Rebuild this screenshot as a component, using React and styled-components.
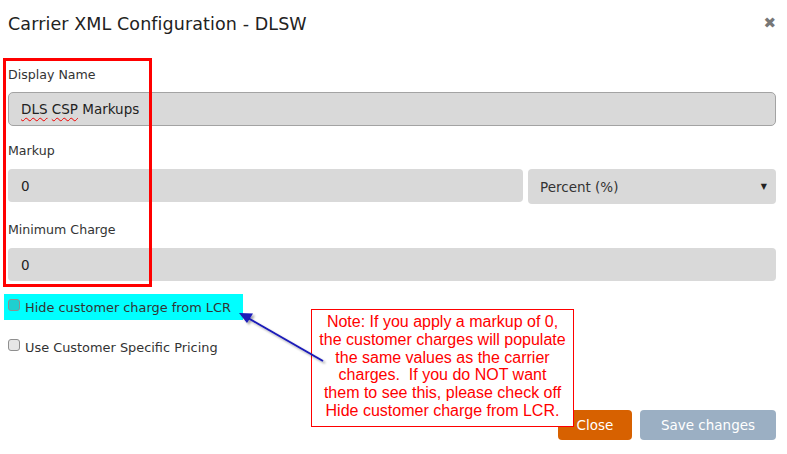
import React from "react";
import styled, { createGlobalStyle } from "styled-components";

const Global = createGlobalStyle`
  html, body { margin: 0; padding: 0; background: #fff; }
  body { font-family: "DejaVu Sans", "Noto Sans", sans-serif; color: #333; }
  * { box-sizing: border-box; }
`;

const Page = styled.div`
  position: relative;
  width: 787px;
  height: 454px;
  overflow: hidden;
  background: #fff;
`;

const Dialog = styled.div`
  display: flex;
  flex-direction: column;
  padding: 0 11px 0 8px;
`;

const Header = styled.div`
  display: flex;
  align-items: center;
  justify-content: space-between;
  height: 44px;
  padding-top: 3px;
`;

const Title = styled.h4`
  margin: 0;
  font-size: 17.5px;
  font-weight: 400;
  color: #222;
  line-height: 24px;
  letter-spacing: 0.1px;
`;

const CloseX = styled.span`
  font-size: 15px;
  color: #777;
  font-weight: bold;
  margin-right: 0px;
  line-height: 1;
`;

const Body = styled.div`
  display: flex;
  flex-direction: column;
  padding-top: 22px;
`;

const Group = styled.div`
  display: flex;
  flex-direction: column;
  margin-bottom: ${(p) => p.$mb || 0}px;
`;

const Label = styled.label`
  font-size: 12.6px;
  line-height: 18px;
  color: #333;
  margin-bottom: ${(p) => p.$mb || 8}px;
`;

const Input = styled.div`
  display: flex;
  align-items: center;
  height: ${(p) => p.$h || 33}px;
  background: #d9d9d9;
  border: ${(p) => (p.$bordered ? "1px solid #a3a3a3" : "none")};
  border-radius: ${(p) => (p.$bordered ? 5 : 4)}px;
  padding-left: ${(p) => (p.$bordered ? 12 : 13)}px;
  font-size: 13.5px;
  color: #222;
  flex: ${(p) => p.$flex || "initial"};
`;

const Squiggle = styled.span`
  text-decoration: underline wavy #e00;
  text-decoration-thickness: 1px;
  text-underline-offset: 3px;
`;

const Row = styled.div`
  display: flex;
  gap: 5px;
  align-items: flex-start;
`;

const Select = styled.div`
  display: flex;
  align-items: center;
  justify-content: space-between;
  width: 248px;
  height: 35px;
  background: #d9d9d9;
  border-radius: 4px;
  padding: 0 9px 0 12px;
  font-size: 13.5px;
  color: #333;
`;

const Caret = styled.span`
  font-size: 8px;
  color: #222;
`;

const CheckRow = styled.div`
  display: flex;
  align-items: center;
  gap: 5px;
  width: 239px;
  height: 26px;
  margin-left: -4px;
  padding-left: 4px;
  background: ${(p) => (p.$hl ? "#00ffff" : "transparent")};
  margin-top: ${(p) => p.$mt || 0}px;
`;

const Box = styled.span`
  width: 12px;
  height: 12px;
  border: 1px solid #8f8f8f;
  border-radius: 3px;
  background: ${(p) => (p.$hl ? "#1fcfcf" : "#e6e6e6")};
  flex: none;
  margin-top: -4px;
`;

const CheckText = styled.span`
  font-size: 12.9px;
  color: #333;
  white-space: nowrap;
`;

const Footer = styled.div`
  display: flex;
  justify-content: flex-end;
  gap: 8px;
  margin-top: 50px;
`;

const Button = styled.button`
  height: 30px;
  width: ${(p) => p.$w}px;
  border: none;
  border-radius: 4px;
  background: ${(p) => p.$bg};
  color: #fff;
  font-family: "DejaVu Sans", sans-serif;
  font-size: 13.5px;
  padding: 0;
`;

const RedFrame = styled.div`
  position: absolute;
  left: 3px;
  top: 58px;
  width: 149px;
  height: 229px;
  border: 3px solid #ff0000;
  pointer-events: none;
`;

const Note = styled.div`
  position: absolute;
  left: 311px;
  top: 309px;
  width: 263px;
  height: 118px;
  border: 1px solid #ff0000;
  background: #fff;
  color: #ff0000;
  font-family: "Liberation Sans", Arial, sans-serif;
  font-size: 16px;
  line-height: 17.8px;
  text-align: center;
  padding-top: 3px;
  white-space: pre-wrap;
`;

const ArrowSvg = styled.svg`
  position: absolute;
  left: 0;
  top: 0;
  pointer-events: none;
`;

export default function App() {
  return (
    <Page>
      <Global />
      <Dialog>
        <Header>
          <Title>Carrier XML Configuration - DLSW</Title>
          <CloseX>✖</CloseX>
        </Header>
        <Body>
          <Group $mb={16}>
            <Label>Display Name</Label>
            <Input $bordered $h={34}>
              <Squiggle>DLS</Squiggle>&nbsp;<Squiggle>CSP</Squiggle>&nbsp;Markups
            </Input>
          </Group>
          <Group $mb={17}>
            <Label $mb={9}>Markup</Label>
            <Row>
              <Input $flex="1">0</Input>
              <Select>
                <span>Percent (%)</span>
                <Caret>▼</Caret>
              </Select>
            </Row>
          </Group>
          <Group $mb={13}>
            <Label $mb={9}>Minimum Charge</Label>
            <Input>0</Input>
          </Group>
          <CheckRow $hl>
            <Box $hl />
            <CheckText>Hide customer charge from LCR</CheckText>
          </CheckRow>
          <CheckRow $mt={14}>
            <Box />
            <CheckText>Use Customer Specific Pricing</CheckText>
          </CheckRow>
          <Footer>
            <Button $w={74} $bg="#d76100">Close</Button>
            <Button $w={136} $bg="#9bafc3">Save changes</Button>
          </Footer>
        </Body>
      </Dialog>
      <RedFrame />
      <Note>
        {"Note: If you apply a markup of 0,\nthe customer charges will populate\nthe same values as the carrier\ncharges.  If you do NOT want\nthem to see this, please check off\nHide customer charge from LCR."}
      </Note>
      <ArrowSvg width="787" height="454" viewBox="0 0 787 454">
        <defs>
          <filter id="sh" x="-20%" y="-20%" width="140%" height="140%">
            <feDropShadow dx="2" dy="2" stdDeviation="1.2" floodColor="#000" floodOpacity="0.35" />
          </filter>
        </defs>
        <g filter="url(#sh)">
          <line x1="323" y1="361" x2="248" y2="318" stroke="#1a1ab8" strokeWidth="2" />
          <polygon points="239,313 253,313.5 247,323" fill="#1a1ab8" />
        </g>
      </ArrowSvg>
    </Page>
  );
}
